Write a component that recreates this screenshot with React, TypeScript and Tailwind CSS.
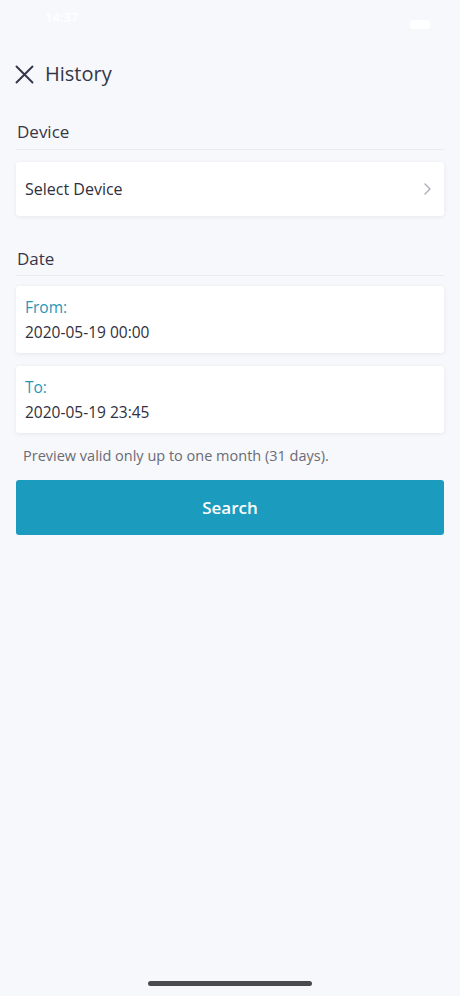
import * as React from 'react';

const font = { fontFamily: '"Open Sans", "Noto Sans", sans-serif' };

const DateCard = ({ label, value }: { label: string; value: string }) => (
  <div className="flex h-[67px] flex-col justify-center rounded-[3px] bg-white px-[9px] shadow-[0_1px_4px_rgba(30,40,70,0.08)]">
    <span className="text-[15.5px] leading-[20px] text-[#2497b9]">{label}</span>
    <span className="mt-[5px] text-[15.5px] leading-[20px] text-[#2f2f3d]">{value}</span>
  </div>
);

export default function App() {
  return (
    <div className="flex min-h-[996px] w-[460px] flex-col bg-[#f7f8fb]" style={font}>
      {/* status bar (white on light, nearly invisible) */}
      <div className="flex h-[48px] items-start justify-between pr-[30px] pl-[45px] pt-[8px] text-[13px] font-semibold text-white">
        <span>14:37</span>
        <div className="mt-[12px] h-[9px] w-[20px] rounded-[2px] bg-white" />
      </div>

      {/* header */}
      <div className="flex h-[52px] items-center gap-[11px] px-[15px]">
        <svg width="19" height="19" viewBox="0 0 19 19" fill="none" stroke="#35354a" strokeWidth="1.9" strokeLinecap="round">
          <path d="M1.5 1.5L17.5 17.5M17.5 1.5L1.5 17.5" />
        </svg>
        <span className="text-[20px] leading-[26px] text-[#35354a]">History</span>
      </div>

      <div className="flex flex-col px-[16px]">
        {/* Device */}
        <div className="mt-[21px] border-b border-[#e9ebf0] pb-[6px] pl-[1px] text-[17px] leading-[22px] font-medium text-[#36364a]">
          Device
        </div>
        <div className="mt-[12px] flex h-[54px] items-center justify-between rounded-[3px] bg-white pr-[13px] pl-[9px] shadow-[0_1px_4px_rgba(30,40,70,0.08)]">
          <span className="text-[16px] font-medium text-[#2f2f3d]">Select Device</span>
          <svg width="7" height="12" viewBox="0 0 7 12" fill="none" stroke="#a9abb3" strokeWidth="1.3" strokeLinecap="round" strokeLinejoin="round">
            <path d="M1 1l5 5-5 5" />
          </svg>
        </div>

        {/* Date */}
        <div className="mt-[32px] border-b border-[#e9ebf0] pb-[5px] pl-[1px] text-[17px] leading-[22px] font-medium text-[#36364a]">
          Date
        </div>
        <div className="mt-[10px] flex flex-col gap-[13px]">
          <DateCard label="From:" value="2020-05-19 00:00" />
          <DateCard label="To:" value="2020-05-19 23:45" />
        </div>

        <p className="mt-[14px] pl-[7px] text-[14.5px] leading-[18px] text-[#6b6b74]">
          Preview valid only up to one month (31 days).
        </p>

        <button className="mt-[15px] flex h-[55px] items-center justify-center rounded-[3px] bg-[#1b9bbd] text-[17px] font-semibold text-white">
          Search
        </button>
      </div>

      <div className="flex-1" />
      <div className="flex justify-center pb-[10px]">
        <div className="h-[5px] w-[164px] rounded-full bg-[#4a4a4f]" />
      </div>
    </div>
  );
}
